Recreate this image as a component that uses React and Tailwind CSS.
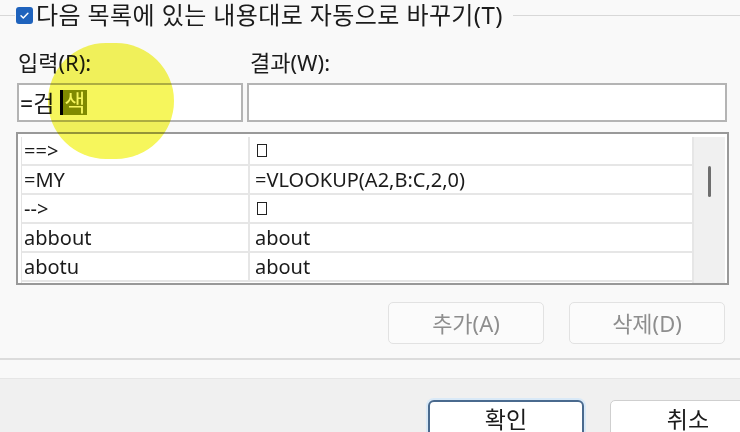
export default function App() {
  const rows = [
    ["==>", "□"],
    ["=MY", "=VLOOKUP(A2,B:C,2,0)"],
    ["-->", "□"],
    ["abbout", "about"],
    ["abotu", "about"],
  ];

  return (
    <div className="relative w-[740px] h-[432px] overflow-hidden bg-[#f9f9f9] text-[#1b1b1b] font-['Noto_Sans','Noto_Sans_CJK_KR',sans-serif] flex flex-col">
      {/* group box header with checkbox */}
      <div className="h-[30px] flex items-center shrink-0">
        <div className="w-[15px] h-px bg-[#d8d8d8]" />
        <div className="ml-[1px] w-[17px] h-[17px] rounded-[3px] bg-[#1f63bd] flex items-center justify-center">
          <svg width="11" height="11" viewBox="0 0 12 12" fill="none">
            <path d="M2.2 6.3l2.5 2.4 5-5.2" stroke="#fff" strokeWidth="1.6" strokeLinecap="round" strokeLinejoin="round" />
          </svg>
        </div>
        <span className="ml-[3px] text-[24px] leading-[30px] tracking-[0.4px] whitespace-nowrap">다음 목록에 있는 내용대로 자동으로 바꾸기(T)</span>
        <div className="ml-[10px] flex-1 h-px bg-[#d8d8d8]" />
      </div>

      {/* labels + inputs */}
      <div className="shrink-0 pl-[17px] pr-[13px] grid grid-cols-[226px_1fr] gap-x-[4px]">
        <div className="pt-[18px] h-[53px] pl-[1px] text-[22px] leading-[28px]">입력(R):</div>
        <div className="pt-[18px] h-[53px] pl-[3px] text-[22px] leading-[28px]">결과(W):</div>
        <div className="h-[39px] border-2 border-[#b4b4b4] bg-white flex items-center pl-[1px] text-[23px] leading-[28px]">
          <span>=검</span>
          <span className="ml-[6px] w-[3px] h-[25px] bg-black" />
          <span className="h-[25px] px-[1px] bg-[#858f00] text-white flex items-center leading-none">색</span>
        </div>
        <div className="h-[39px] border-2 border-[#b4b4b4] bg-white" />
      </div>

      {/* replacement list */}
      <div className="shrink-0 mt-[10px] ml-[16px] mr-[11px] h-[153px] border-2 border-[#999999] bg-white pt-[3px] pl-[3px] pr-[2px] flex overflow-hidden">
        <div className="flex-1 border-l border-[#e4e4e4]">
          {rows.map(([a, b], i) => (
            <div key={i} className="h-[29px] grid grid-cols-[228px_1fr] border-b-2 border-[#e6e6e6] text-[20px] leading-[24px]">
              <div className="pl-[2px] flex items-center border-r-2 border-[#e6e6e6] whitespace-nowrap">{a}</div>
              <div className="pl-[5px] flex items-center whitespace-nowrap">
                {b === "□" ? <span className="ml-[2px] w-[10px] h-[13px] border border-[#222]" /> : b}
              </div>
            </div>
          ))}
        </div>
        <div className="w-[33px] border-l-2 border-[#e6e6e6] bg-[#f0f0f0] flex justify-center pt-[29px]">
          <div className="w-[3px] h-[31px] rounded-full bg-[#6e6e6e]" />
        </div>
      </div>

      {/* add / delete */}
      <div className="shrink-0 mt-[17px] pr-[15px] flex justify-end gap-[25px]">
        {["추가(A)", "삭제(D)"].map((t) => (
          <div key={t} className="w-[156px] h-[42px] rounded-[5px] border border-[#e2e2e2] bg-[#fbfbfb] text-[#8e8e8e] text-[22px] flex items-center justify-center">
            {t}
          </div>
        ))}
      </div>

      <div className="shrink-0 mt-[14px] h-[2px] bg-[#dcdcdc]" />
      <div className="shrink-0 h-[18px]" />
      <div className="shrink-0 h-px bg-[#e6e6e6]" />

      {/* footer buttons */}
      <div className="flex-1 min-h-0 bg-[#f0f0f0] pt-[21px] pl-[428px] flex items-start gap-[26px]">
        <div className="w-[156px] h-[44px] shrink-0 rounded-[6px] border-2 border-[#4a6a8e] bg-white shadow-[0_0_0_2px_#d9e9f7] flex justify-center pt-[3px] text-[23px] leading-[28px]">확인</div>
        <div className="w-[156px] h-[44px] shrink-0 rounded-[5px] border border-[#cfcfcf] bg-white flex justify-center pt-[4px] text-[23px] leading-[28px]">취소</div>
      </div>

      {/* cursor highlight */}
      <div className="absolute left-[48px] top-[43px] w-[126px] h-[116px] rounded-full bg-[#f6f65c] mix-blend-multiply pointer-events-none" />
    </div>
  );
}
